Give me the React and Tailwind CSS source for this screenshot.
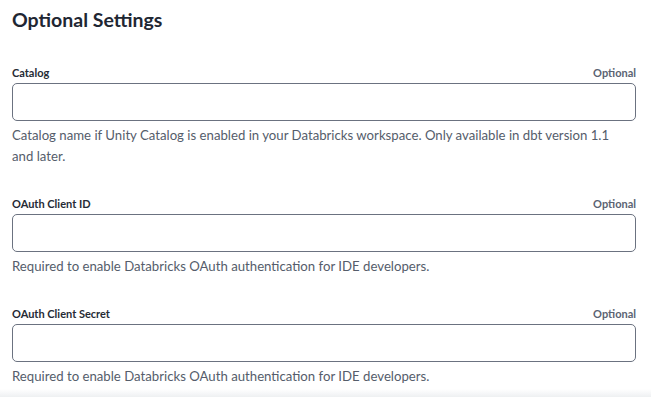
const fields = [
    {
        label: 'Catalog',
        help: 'Catalog name if Unity Catalog is enabled in your Databricks workspace. Only available in dbt version 1.1 and later.',
    },
    {
        label: 'OAuth Client ID',
        help: 'Required to enable Databricks OAuth authentication for IDE developers.',
    },
    {
        label: 'OAuth Client Secret',
        help: 'Required to enable Databricks OAuth authentication for IDE developers.',
    },
];

function Field({ label, help }) {
    return (
        <div className="mb-[22px]">
            <div className="flex items-end justify-between h-[20px] mb-[5px]">
                <label className="text-[11px] font-bold text-[#262b35] leading-none">{label}</label>
                <span className="text-[11px] font-bold text-[#5b6372] leading-none">Optional</span>
            </div>
            <input
                type="text"
                className="block w-full h-[38px] rounded-[5px] border border-[#6b7280] bg-white px-3 outline-none"
            />
            <p className="mt-[4px] pr-[24px] text-[13.2px] leading-[21px] text-[#555d6b]">{help}</p>
        </div>
    );
}

export default function App() {
    return (
        <div
            className="relative w-[651px] h-[397px] overflow-hidden bg-white"
            style={{ fontFamily: 'Lato, "Liberation Sans", sans-serif' }}
        >
            <div className="pl-3 pr-[15px] pt-[7px]">
                <h2 className="text-[19.5px] font-bold text-[#1f2733] leading-[26px] mb-[25px]">Optional Settings</h2>
                {fields.map((f) => (
                    <Field key={f.label} {...f} />
                ))}
            </div>
            <div className="absolute left-0 right-0 bottom-0 h-[8px] bg-gradient-to-b from-white/0 to-[#eef0f2]" />
        </div>
    );
}
